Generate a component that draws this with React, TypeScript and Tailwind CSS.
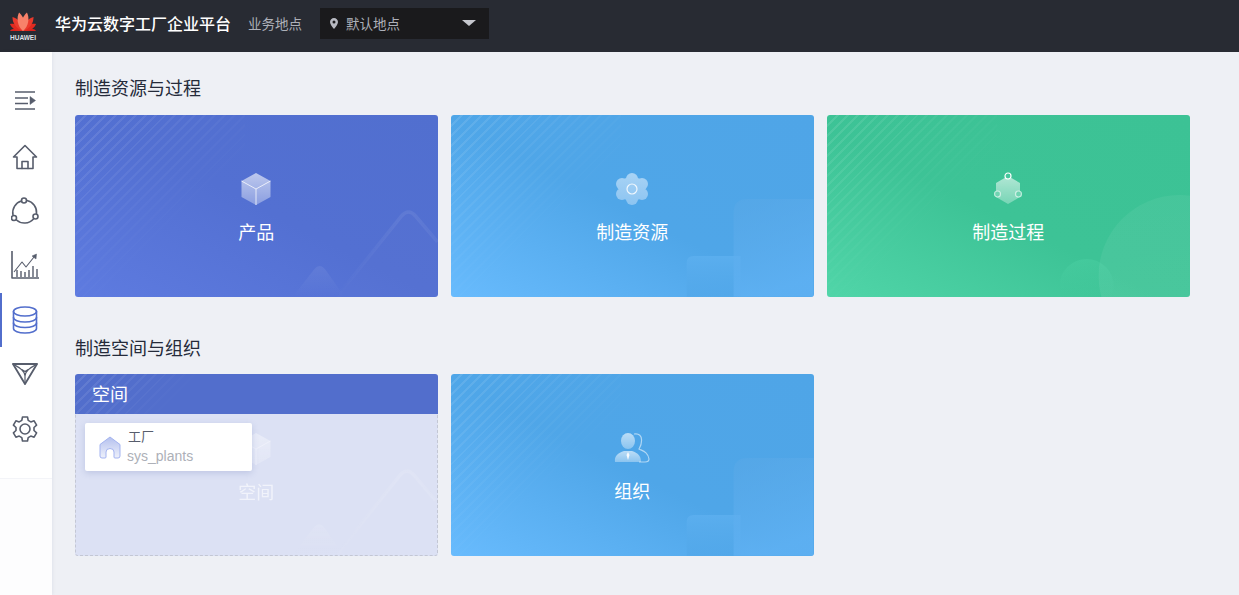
import React from 'react';

type Kind = 'mountain' | 'square' | 'circle';

const stripeClass =
  'absolute left-0 top-0 h-full w-[170px] bg-[repeating-linear-gradient(135deg,rgba(255,255,255,0.11)_0,rgba(255,255,255,0.11)_2px,transparent_2px,transparent_7px)] [mask-image:linear-gradient(135deg,black_0%,transparent_62%)]';

const blueCard = 'bg-linear-to-tr from-[#68bbfd] via-[#4fa6e8] via-48% to-[#4fa5e7]';

const Decor: React.FC<{ kind: Kind; pale?: boolean }> = ({ kind, pale }) => {
  if (kind === 'mountain') {
    const id = pale ? 'mtp' : 'mt';
    return (
      <svg className="absolute inset-0 h-full w-full" viewBox="0 0 363 182" fill="none">
        <defs>
          <linearGradient id={id} x1="0" y1="0" x2="0" y2="1">
            <stop offset="0" stopColor="#fff" stopOpacity={pale ? 0.18 : 0.07} />
            <stop offset="1" stopColor="#fff" stopOpacity="0" />
          </linearGradient>
        </defs>
        <path d="M218 182 L239 155 Q245 147 251 155 L270 182 Z" fill={`url(#${id})`} />
        <path d="M262 182 L327 101 Q334 93 341 101 L363 127 V182 Z" fill="#fff" fillOpacity={pale ? 0.05 : 0.012} />
        <path d="M262 182 L327 101 Q334 93 341 101 L363 127" stroke={`url(#${id})`} strokeWidth="3.5" />
      </svg>
    );
  }
  if (kind === 'square') {
    return (
      <svg className="absolute inset-0 h-full w-full" viewBox="0 0 363 182" fill="none">
        <defs>
          <linearGradient id="sqA" x1="0" y1="0" x2="0.3" y2="1">
            <stop offset="0" stopColor="#5aa8e6" stopOpacity="0.5" />
            <stop offset="1" stopColor="#62b3f5" stopOpacity="0.7" />
          </linearGradient>
          <linearGradient id="sqB" x1="0" y1="0" x2="0" y2="1">
            <stop offset="0" stopColor="#5cafef" stopOpacity="0.9" />
            <stop offset="1" stopColor="#50a6e8" stopOpacity="0.6" />
          </linearGradient>
        </defs>
        <path d="M236 182 V148 Q236 141 243 141 H290 V182 Z" fill="url(#sqB)" />
        <path d="M283 182 V98 Q283 84 297 84 H363 V182 Z" fill="url(#sqA)" />
      </svg>
    );
  }
  return (
    <svg className="absolute inset-0 h-full w-full" viewBox="0 0 363 182" fill="none">
      <defs>
        <linearGradient id="ciA" x1="0" y1="0" x2="0.2" y2="1">
          <stop offset="0" stopColor="#fff" stopOpacity="0.05" />
          <stop offset="1" stopColor="#fff" stopOpacity="0.07" />
        </linearGradient>
        <linearGradient id="ciB" x1="0" y1="0" x2="0" y2="1">
          <stop offset="0" stopColor="#4fd3a6" stopOpacity="0.4" />
          <stop offset="1" stopColor="#3cc295" stopOpacity="0.1" />
        </linearGradient>
      </defs>
      <circle cx="260" cy="171" r="27" fill="url(#ciB)" />
      <circle cx="353" cy="161" r="81" fill="url(#ciA)" />
    </svg>
  );
};

const CubeIcon = () => (
  <svg width="32" height="34" viewBox="0 0 32 34" fill="none">
    <defs>
      <linearGradient id="cube" x1="0" y1="0" x2="0" y2="1">
        <stop offset="0" stopColor="#fff" stopOpacity="0.62" />
        <stop offset="1" stopColor="#fff" stopOpacity="0.32" />
      </linearGradient>
    </defs>
    <path d="M16 1 L30.500 9 V25 L16 33 L1.500 25 V9 Z" fill="url(#cube)" />
    <path d="M1.500 9 L16 17 L30.500 9 M16 17 V33" stroke="#fff" strokeOpacity="0.75" strokeWidth="1" />
  </svg>
);

const FlowerIcon = () => (
  <svg width="34" height="34" viewBox="0 0 34 34" fill="none">
    <defs>
      <linearGradient id="flower" gradientUnits="userSpaceOnUse" x1="0" y1="1" x2="0" y2="33">
        <stop offset="0" stopColor="#a8d3f5" />
        <stop offset="1" stopColor="#8cc4f1" />
      </linearGradient>
    </defs>
    <g fill="url(#flower)">
      <circle cx="17" cy="17" r="12.500" />
      <circle cx="17" cy="7" r="6" />
      <circle cx="17" cy="27" r="6" />
      <circle cx="7" cy="12" r="6" />
      <circle cx="27" cy="12" r="6" />
      <circle cx="7" cy="22" r="6" />
      <circle cx="27" cy="22" r="6" />
    </g>
    <circle cx="17" cy="17" r="5" stroke="#fff" strokeOpacity="0.85" strokeWidth="1.200" />
  </svg>
);

const HexIcon = () => (
  <svg width="32" height="34" viewBox="0 0 32 34" fill="none">
    <defs>
      <linearGradient id="hex" x1="0" y1="0" x2="0" y2="1">
        <stop offset="0" stopColor="#fff" stopOpacity="0.6" />
        <stop offset="1" stopColor="#fff" stopOpacity="0.3" />
      </linearGradient>
    </defs>
    <path d="M16 4 L28 11 V25 L16 32 L4 25 V11 Z" fill="url(#hex)" />
    <circle cx="16" cy="4" r="3" fill="#45c69b" stroke="#fff" strokeWidth="1.200" />
    <circle cx="5.500" cy="22" r="3" fill="#6fd4b2" stroke="#fff" strokeOpacity="0.6" strokeWidth="1.200" />
    <circle cx="26.500" cy="22" r="3" fill="#6fd4b2" stroke="#fff" strokeOpacity="0.6" strokeWidth="1.200" />
  </svg>
);

const PeopleIcon = () => (
  <svg width="36" height="30" viewBox="0 0 36 30" fill="none">
    <defs>
      <linearGradient id="people" x1="0" y1="0" x2="0" y2="1">
        <stop offset="0" stopColor="#fff" stopOpacity="0.62" />
        <stop offset="1" stopColor="#fff" stopOpacity="0.34" />
      </linearGradient>
    </defs>
    <path d="M20 1 C25 0 28 3 27.500 8 C27.500 12 26 14 25 16 C29 18 34 19 35 26 C35 28 33 29 31 29 H25" stroke="#fff" strokeOpacity="0.55" strokeWidth="1.200" />
    <ellipse cx="14" cy="8" rx="7" ry="8" fill="url(#people)" />
    <path d="M1 29 C0 23 4 20 10 18 H18 C24 20 27 23 27 29 Z" fill="url(#people)" />
    <path d="M14 19 L15.500 22 L14 27 L12.500 22 Z" fill="#fff" fillOpacity="0.9" />
  </svg>
);

const CardInner: React.FC<{ kind: Kind; icon: React.ReactNode; label: string; pale?: boolean }> = ({ kind, icon, label, pale }) => (
  <>
    {!pale && <div className={stripeClass} />}
    <Decor kind={kind} pale={pale} />
    <div className="absolute left-0 right-0 top-[55px] flex h-[38px] items-center justify-center">{icon}</div>
    <div className="absolute left-0 right-0 top-[102px] text-center text-[18px] leading-[28px] text-white">{label}</div>
  </>
);

const Card: React.FC<{ kind: Kind; icon: React.ReactNode; label: string; bg: string }> = ({ kind, icon, label, bg }) => (
  <div className={`relative h-[182px] w-[362.5px] overflow-hidden rounded-[3px] ${bg}`}>
    <CardInner kind={kind} icon={icon} label={label} />
  </div>
);

const SideIcon: React.FC<{ children: React.ReactNode; active?: boolean }> = ({ children, active }) => (
  <div className="relative flex h-[54.4px] w-full items-center justify-center pr-[2px] text-[#575d6c]">
    {active && <div className="absolute bottom-0 left-0 top-0 w-[2px] bg-[#526ecc]" />}
    {children}
  </div>
);

const svgProps = {
  fill: 'none',
  stroke: 'currentColor',
  strokeWidth: 1.6,
  strokeLinecap: 'round' as const,
  strokeLinejoin: 'round' as const,
};

const petal = 'M13 19 C8.500 13 9 5 13 0 C17 5 17.500 13 13 19 Z';

const HuaweiLogo = () => {
  const petals: [number, number, string][] = [
    [-88, 0.68, '#d9221c'],
    [88, 0.68, '#d9221c'],
    [-62, 0.78, '#e02a20'],
    [62, 0.78, '#e02a20'],
    [-37, 0.92, '#ea3a2c'],
    [37, 0.92, '#ea3a2c'],
    [-12, 1, '#f8826a'],
    [12, 1, '#f8826a'],
  ];
  return (
    <svg width="26" height="19" viewBox="0 0 26 19">
      {petals.map(([a, s, c]) => (
        <path key={a} d={petal} transform={`rotate(${a} 13 19) translate(13 19) scale(${s}) translate(-13 -19)`} fill={c} />
      ))}
    </svg>
  );
};

export default function App() {
  return (
    <div className="flex h-[595px] w-[1239px] flex-col overflow-hidden bg-[#eef0f5] font-['Noto_Sans_CJK_SC','Noto_Sans',sans-serif]">
      <header className="flex h-[52px] shrink-0 items-center bg-[#282b33] pb-[6px]">
        <div className="flex w-[46px] shrink-0 flex-col items-center pt-[7px]">
          <HuaweiLogo />
          <span className="mt-[2px] font-['Liberation_Sans',sans-serif] text-[6.5px] font-bold leading-[9px] text-[#dfe1e6]">HUAWEI</span>
        </div>
        <div className="ml-[9px] text-[16px] font-medium leading-[24px] text-white">华为云数字工厂企业平台</div>
        <div className="ml-[17px] text-[13.5px] leading-[20px] text-[#adb0b8]">业务地点</div>
        <div className="ml-[18px] flex h-[31px] w-[169px] items-center bg-[#1a1a1c] pl-[10px] pr-[13px]">
          <svg width="8" height="11" viewBox="0 0 8 11" className="mt-[1px]">
            <path fillRule="evenodd" d="M4 0 C6.200 0 8 1.800 8 4 C8 6.500 5.500 9 4 11 C2.500 9 0 6.500 0 4 C0 1.800 1.800 0 4 0 Z M4 2.500 A1.500 1.500 0 1 0 4 5.500 A1.500 1.500 0 1 0 4 2.500 Z" fill="#b8bac2" />
          </svg>
          <span className="ml-[8px] flex-1 text-[13.5px] leading-[20px] text-[#adb0b8]">默认地点</span>
          <div className="h-0 w-0 border-x-[7px] border-t-[6px] border-x-transparent border-t-[#c6c8ce]" />
        </div>
      </header>

      <div className="flex min-h-0 flex-1">
        <aside className="relative z-10 flex w-[52px] shrink-0 flex-col bg-[#fdfdfe] shadow-[1px_0_3px_rgba(80,90,130,0.08)]">
          <div className="border-b border-[#f3f4f8] bg-white pb-[22px] pt-[23px]">
            <SideIcon>
              <svg width="21" height="19" viewBox="0 0 21 19" {...svgProps} strokeLinecap="butt" className="-mt-[3px]">
                <path d="M0 1 H20 M0 18 H20 M0 7 H13 M0 12.500 H13" />
                <path d="M15 5.500 L20.500 9.500 L15 13.500 Z" fill="currentColor" strokeWidth="0.500" />
              </svg>
            </SideIcon>
            <SideIcon>
              <svg width="26" height="26" viewBox="0 0 26 26" {...svgProps}>
                <path d="M1.500 13 L13 1.500 L24.500 13 H21 V24.500 H5 V13 Z" />
                <path d="M10 24.500 V17.500 H16 V24.500" />
              </svg>
            </SideIcon>
            <SideIcon>
              <svg width="28" height="28" viewBox="0 0 28 28" {...svgProps}>
                <circle cx="13" cy="3.500" r="2.500" />
                <circle cx="3" cy="21" r="2.500" />
                <circle cx="24.500" cy="19.500" r="2.500" />
                <path d="M10.500 4 A 12 12 0 0 0 2 18 M5.500 23 A 12 12 0 0 0 22.500 22 M25.500 16.500 A 12 12 0 0 0 16 3.500" />
              </svg>
            </SideIcon>
            <SideIcon>
              <svg width="28" height="28" viewBox="0 0 28 28" {...svgProps} strokeLinecap="butt">
                <path d="M1 0 V27 H28" />
                <path d="M3 21 L11 11 L15 16 L23 6" strokeWidth="1.100" />
                <path d="M21 5 L25.500 3 L25 8 Z" fill="currentColor" strokeWidth="0.500" />
                <path d="M6 26 V19 M10 26 V20 M14 26 V21 M18 26 V19 M22 26 V15 M26 26 V18" strokeWidth="1.400" />
              </svg>
            </SideIcon>
            <SideIcon active>
              <svg width="26" height="28" viewBox="0 0 26 28" {...svgProps} className="text-[#526ecc]">
                <ellipse cx="13" cy="5.500" rx="11.500" ry="4.500" />
                <path d="M1.500 5.500 V22.500 C1.500 25 6.500 27 13 27 C19.500 27 24.500 25 24.500 22.500 V5.500" />
                <path d="M1.500 11.500 C1.500 14 6.500 16 13 16 C19.500 16 24.500 14 24.500 11.500" />
                <path d="M1.500 17 C1.500 19.500 6.500 21.500 13 21.500 C19.500 21.500 24.500 19.500 24.500 17" />
              </svg>
            </SideIcon>
            <SideIcon>
              <svg width="26" height="22" viewBox="0 0 26 22" {...svgProps}>
                <path d="M1 1 H25 L13 21 Z" strokeWidth="1.800" />
                <path d="M1 1 L13 8.500 L25 1 M13 21 V13 C13 10 15 6 25 1 M13 13 C13 10 11 6 1 1" strokeWidth="1.200" />
              </svg>
            </SideIcon>
            <SideIcon>
              <svg width="28" height="28" viewBox="0 0 28 28" {...svgProps}>
                <circle cx="14" cy="14" r="5" />
                <path d="M11.500 2 H16.500 L17.200 5.400 L19.800 6.900 L23.100 5.800 L25.600 10.200 L23 12.500 V15.500 L25.600 17.800 L23.100 22.200 L19.800 21.100 L17.200 22.600 L16.500 26 H11.500 L10.800 22.600 L8.200 21.100 L4.900 22.200 L2.400 17.800 L5 15.500 V12.500 L2.400 10.200 L4.900 5.800 L8.200 6.900 L10.800 5.400 Z" />
              </svg>
            </SideIcon>
          </div>
        </aside>

        <main className="min-w-0 flex-1 pl-[23px]">
          <h2 className="mb-[14px] mt-[22px] text-[18px] font-normal leading-[27px] text-[#252b3a]">制造资源与过程</h2>
          <div className="flex gap-[13.5px]">
            <Card kind="mountain" icon={<CubeIcon />} label="产品" bg="bg-linear-to-tr from-[#5e7be0] via-[#5370d2] via-50% to-[#516fcf]" />
            <Card kind="square" icon={<FlowerIcon />} label="制造资源" bg={blueCard} />
            <Card kind="circle" icon={<HexIcon />} label="制造过程" bg="bg-linear-to-tr from-[#50d5a8] via-[#3dc396] via-46% to-[#3cc295]" />
          </div>

          <h2 className="mb-[13px] mt-[37px] text-[18px] font-normal leading-[27px] text-[#252b3a]">制造空间与组织</h2>
          <div className="flex gap-[13.5px]">
            <div className="relative h-[182px] w-[362.5px] rounded-[3px] bg-[#dce1f4]">
              <div className="absolute inset-0 overflow-hidden rounded-[3px] border border-dashed border-[#c3c7d4]">
                <div className="absolute inset-0 opacity-60">
                  <CardInner kind="mountain" icon={<CubeIcon />} label="空间" pale />
                </div>
              </div>
              <div className="relative h-[40px] overflow-hidden rounded-t-[3px] bg-[#526ecc] pl-[17px] text-[18px] leading-[39px] text-white">
                <div className={stripeClass} />
                <span className="relative">空间</span>
              </div>
              <div className="absolute left-[10px] top-[49px] flex h-[48px] w-[167px] items-center rounded-[2px] bg-white pl-[14px] shadow-[0_2px_6px_rgba(80,100,170,0.22)]">
                <svg width="22" height="23" viewBox="0 0 22 23" fill="none">
                  <defs>
                    <linearGradient id="house" x1="0" y1="0" x2="0" y2="1">
                      <stop offset="0" stopColor="#b4c0ee" />
                      <stop offset="1" stopColor="#eef1fb" />
                    </linearGradient>
                  </defs>
                  <path
                    d="M11 1 L21 8.500 V20 Q21 22 19 22 H16 Q15 22 15 21 V16 Q15 12.500 11 12.500 Q7 12.500 7 16 V21 Q7 22 6 22 H3 Q1 22 1 20 V8.500 Z"
                    fill="url(#house)"
                    stroke="#a3b3f0"
                    strokeWidth="1"
                  />
                </svg>
                <div className="-mt-[2px] ml-[6px] flex flex-col">
                  <span className="ml-[1px] text-[13px] leading-[20px] text-[#575d6c]">工厂</span>
                  <span className="font-['Liberation_Sans',sans-serif] text-[14px] leading-[20px] text-[#adb0b8]">sys_plants</span>
                </div>
              </div>
            </div>
            <Card kind="square" icon={<PeopleIcon />} label="组织" bg={blueCard} />
          </div>
        </main>
      </div>
    </div>
  );
}
